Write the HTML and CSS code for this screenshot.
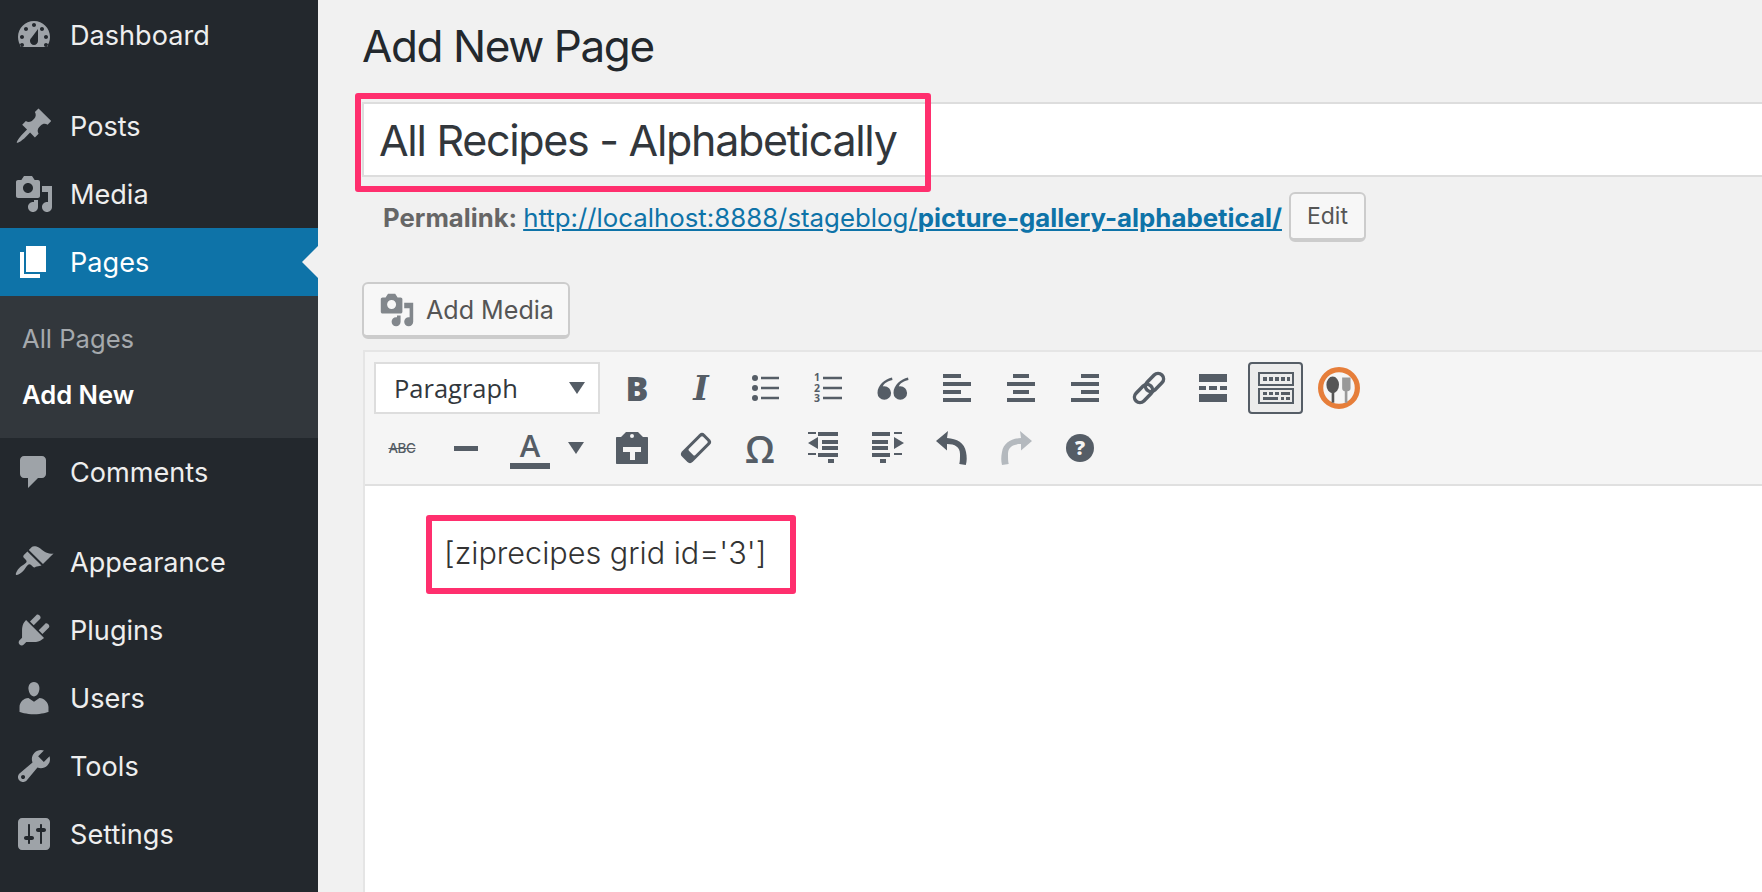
FILE: index.html
```html
<!DOCTYPE html>
<html lang="en">
<head>
  <meta charset="UTF-8">
  <title>Add New Page</title>
  <link rel="stylesheet" href="styles.css">
</head>
<body>
  <nav class="sidebar">
    <a class="menu-item first"><svg class="menu-icon" viewBox="0 0 20 20"><path fill-rule="evenodd" d="M3.76 16h12.48c1.1-1.37 1.76-3.11 1.76-5 0-4.42-3.58-8-8-8s-8 3.58-8 8c0 1.89.66 3.63 1.76 5zM10 4c.55 0 1 .45 1 1s-.45 1-1 1-1-.45-1-1 .45-1 1-1zM6 6c.55 0 1 .45 1 1s-.45 1-1 1-1-.45-1-1 .45-1 1-1zm8 0c.55 0 1 .45 1 1s-.45 1-1 1-1-.45-1-1 .45-1 1-1zm-5.37 5.55L12 7v6c0 1.1-.9 2-2 2s-2-.9-2-2c0-.57.24-1.08.63-1.45zM4 10c.55 0 1 .45 1 1s-.45 1-1 1-1-.45-1-1 .45-1 1-1zm12 0c.55 0 1 .45 1 1s-.45 1-1 1-1-.45-1-1 .45-1 1-1zm-12 4c.55 0 1 .45 1 1s-.45 1-1 1-1-.45-1-1 .45-1 1-1zm12 0c.55 0 1 .45 1 1s-.45 1-1 1-1-.45-1-1 .45-1 1-1z"/></svg>Dashboard</a>
    <a class="menu-item group-start"><svg class="menu-icon" viewBox="0 0 20 20"><path d="M10.44 3.02l1.82-1.82 6.36 6.35-1.83 1.82c-1.05-.68-2.48-.57-3.41.36l-.75.75c-.92.93-1.04 2.35-.35 3.41l-1.83 1.82-2.41-2.41-2.8 2.79c-.42.42-3.38 2.71-3.8 2.29s1.86-3.39 2.28-3.81l2.79-2.79L4.1 9.36l1.83-1.82c1.05.69 2.48.57 3.4-.36l.75-.75c.93-.92 1.05-2.35.36-3.41z"/></svg>Posts</a>
    <a class="menu-item"><svg class="menu-icon" viewBox="0 0 20 20"><path fill-rule="evenodd" d="M13 11V4c0-.55-.45-1-1-1h-1.67L9 1H5L3.67 3H2c-.55 0-1 .45-1 1v7c0 .55.45 1 1 1h10c.55 0 1-.45 1-1zM7 4.5c1.38 0 2.5 1.12 2.5 2.5S8.38 9.5 7 9.5 4.5 8.38 4.5 7 5.62 4.5 7 4.5zM14 6h5v10.5c0 1.38-1.12 2.5-2.5 2.5S14 17.88 14 16.5s1.12-2.5 2.5-2.5c.17 0 .34.02.5.05V9h-3V6zm-4 8.05V13h2v3.5c0 1.38-1.12 2.5-2.5 2.5S7 17.88 7 16.5 8.12 14 9.5 14c.17 0 .34.02.5.05z"/></svg>Media</a>
    <a class="menu-item current"><svg class="menu-icon" viewBox="0 0 20 20"><path d="M6 15V2h10v13H6zm-1 1h8v2H3V5h2v11z"/></svg>Pages</a>
    <div class="submenu">
      <a class="sub-item">All Pages</a>
      <a class="sub-item active">Add New</a>
    </div>
    <a class="menu-item"><svg class="menu-icon" viewBox="0 0 20 20"><path d="M5 2h9c1.1 0 2 .9 2 2v7c0 1.1-.9 2-2 2h-2l-5 5v-5H5c-1.1 0-2-.9-2-2V4c0-1.1.9-2 2-2z"/></svg>Comments</a>
    <a class="menu-item group-start alt"><svg class="menu-icon" viewBox="0 0 20 20"><path d="M14.48 11.06L7.41 3.99l1.5-1.5c.5-.56 2.3-.47 3.51.32 1.21.8 1.43 1.28 2.91 2.1 1.18.64 2.45 1.26 4.45.85zm-.71.71L6.7 4.7 4.93 6.47c-.39.39-.39 1.02 0 1.41l1.06 1.06c.39.39.39 1.03 0 1.42-.6.6-1.43 1.11-2.21 1.69-.35.26-.7.53-1.01.84-1.34 1.34-2.14 3.1-1.77 3.47.37.37 2.13-.43 3.47-1.77.31-.31.58-.66.84-1.01.58-.78 1.09-1.61 1.69-2.21.39-.39 1.02-.39 1.41 0l1.06 1.06c.39.39 1.02.39 1.41 0z"/></svg>Appearance</a>
    <a class="menu-item"><svg class="menu-icon" viewBox="0 0 20 20"><path d="M13.11 4.36L9.87 7.6 8 5.73l3.24-3.24c.35-.34 1.05-.2 1.56.32.52.51.66 1.21.31 1.55zm-8 1.77l.91-1.12 9.01 9.01-1.19.84c-.71.71-2.63 1.16-3.82 1.16H6.14L4.9 17.26c-.59.59-1.54.59-2.12 0-.59-.58-.59-1.53 0-2.12l1.24-1.24v-3.88c0-1.13.4-3.19 1.09-3.89zm7.26 3.97l3.24-3.24c.34-.35 1.04-.21 1.55.31.52.51.66 1.21.31 1.55l-3.24 3.25z"/></svg>Plugins</a>
    <a class="menu-item"><svg class="menu-icon" viewBox="0 0 20 20"><path d="M10 9.25c-2.27 0-2.73-3.44-2.73-3.44C7 4.02 7.82 2 9.97 2c2.16 0 2.98 2.02 2.71 3.81 0 0-.41 3.44-2.68 3.44zm0 2.57L12.72 10c2.39 0 4.52 2.33 4.52 4.53v2.49s-3.65 1.13-7.24 1.13c-3.65 0-7.24-1.13-7.24-1.13v-2.49c0-2.25 1.94-4.48 4.47-4.48z"/></svg>Users</a>
    <a class="menu-item"><svg class="menu-icon" viewBox="0 0 20 20"><path fill-rule="evenodd" d="M16.68 9.77c-1.34 1.34-3.3 1.67-4.95.99l-5.41 6.52c-.99.99-2.59.99-3.58 0s-.99-2.59 0-3.57l6.52-5.42c-.68-1.65-.35-3.61.99-4.95 1.28-1.28 3.12-1.62 4.72-1.06l-2.89 2.89 2.82 2.82 2.86-2.87c.53 1.58.18 3.39-1.08 4.65zM3.81 16.21c.4.39 1.04.39 1.43 0 .4-.4.4-1.04 0-1.43-.39-.4-1.03-.4-1.43 0-.39.39-.39 1.03 0 1.43z"/></svg>Tools</a>
    <a class="menu-item"><svg class="menu-icon" viewBox="0 0 20 20"><path fill-rule="evenodd" d="M18 16V4c0-1.1-.9-2-2-2H4c-1.1 0-2 .9-2 2v12c0 1.1.9 2 2 2h12c1.1 0 2-.9 2-2zM8 11h1c.55 0 1 .45 1 1s-.45 1-1 1H8v1.5c0 .28-.22.5-.5.5s-.5-.22-.5-.5V13H6c-.55 0-1-.45-1-1s.45-1 1-1h1V5.5c0-.28.22-.5.5-.5s.5.22.5.5V11zm5-2h-1c-.55 0-1-.45-1-1s.45-1 1-1h1V5.5c0-.28.22-.5.5-.5s.5.22.5.5V7h1c.55 0 1 .45 1 1s-.45 1-1 1h-1v5.5c0 .28-.22.5-.5.5s-.5-.22-.5-.5V9z"/></svg>Settings</a>
  </nav>

  <main class="content">
    <h1 class="page-title">Add New Page</h1>

    <div class="title-field">
      <div class="title-input">All Recipes - Alphabetically</div>
      <div class="highlight title-highlight"></div>
    </div>

    <div class="permalink">
      <strong class="permalink-label">Permalink:</strong>
      <a class="permalink-url">http://localhost:8888/stageblog/<b>picture-gallery-alphabetical/</b></a>
      <span class="btn btn-edit">Edit</span>
    </div>

    <div class="media-row">
      <span class="btn btn-media"><svg class="media-icon" viewBox="0 0 20 20"><path fill-rule="evenodd" d="M13 11V4c0-.55-.45-1-1-1h-1.67L9 1H5L3.67 3H2c-.55 0-1 .45-1 1v7c0 .55.45 1 1 1h10c.55 0 1-.45 1-1zM7 4.5c1.38 0 2.5 1.12 2.5 2.5S8.38 9.5 7 9.5 4.5 8.38 4.5 7 5.62 4.5 7 4.5zM14 6h5v10.5c0 1.38-1.12 2.5-2.5 2.5S14 17.88 14 16.5s1.12-2.5 2.5-2.5c.17 0 .34.02.5.05V9h-3V6zm-4 8.05V13h2v3.5c0 1.38-1.12 2.5-2.5 2.5S7 17.88 7 16.5 8.12 14 9.5 14c.17 0 .34.02.5.05z"/></svg>Add Media</span>
    </div>

    <section class="editor">
      <div class="toolbar">
        <div class="tool-row first-row">
          <div class="format-select">Paragraph<span class="caret"></span></div>
          <span class="tool"><span class="glyph-b">B</span></span>
          <span class="tool"><span class="glyph-i">I</span></span>
          <span class="tool"><svg class="ico" viewBox="0 0 40 40"><circle cx="10" cy="10" r="3"/><circle cx="10" cy="20" r="3"/><circle cx="10" cy="30" r="3"/><path d="M16 8.800h18v2.400H16zM16 18.800h18v2.400H16zM16 28.800h18v2.400H16z"/></svg></span>
          <span class="tool"><svg class="ico" viewBox="0 0 40 40"><text class="ol-num" x="5" y="13">1</text><text class="ol-num" x="5" y="23.500">2</text><text class="ol-num" x="5" y="34">3</text><path d="M14 8.800h19v2.400H14zM14 18.800h19v2.400H14zM14 28.800h19v2.400H14z"/></svg></span>
          <span class="tool"><svg class="ico" viewBox="0 0 40 40"><path d="M19 9.500C12 11 4.500 17 4.500 25a6.800 6.800 0 1 0 6.800-6.800c-.5 0-1 .1-1.500.2C11 15.500 14.500 13 19.500 12zM35 9.500C28 11 20.500 17 20.500 25a6.800 6.800 0 1 0 6.800-6.800c-.5 0-1 .1-1.500.2C27 15.500 30.500 13 35.500 12z"/></svg></span>
          <span class="tool"><svg class="ico" viewBox="0 0 40 40"><path d="M6 6h18v4H6zM6 14h28v4H6zM6 22h18v4H6zM6 30h28v4H6z"/></svg></span>
          <span class="tool"><svg class="ico" viewBox="0 0 40 40"><path d="M12 6h16v4H12zM6 14h28v4H6zM12 22h16v4H12zM6 30h28v4H6z"/></svg></span>
          <span class="tool"><svg class="ico" viewBox="0 0 40 40"><path d="M16 6h18v4H16zM6 14h28v4H6zM16 22h18v4H16zM6 30h28v4H6z"/></svg></span>
          <span class="tool"><svg class="ico" viewBox="0 0 40 40"><g class="link-strokes"><rect x="20" y="4" width="11" height="21" rx="5.500" transform="rotate(45 25.500 14.500)"/><rect x="9" y="15" width="11" height="21" rx="5.500" transform="rotate(45 14.500 25.500)"/></g></svg></span>
          <span class="tool"><svg class="ico" viewBox="0 0 40 40"><path d="M6 6h28v8H6zM6 18h7v4H6zM16 18h8v4h-8zM27 18h7v4h-7zM6 26h28v8H6z"/></svg></span>
          <span class="tool tool-active"><svg class="ico-wide" viewBox="0 0 36 32"><path fill-rule="evenodd" d="M0 0h36v14H0zM2 2v10h32V2zM0 16h36v16H0zM2 18v12h32V18z"/><path d="M5 5h4v4H5zM11 5h4v4h-4zM17 5h4v4h-4zM23 5h4v4h-4zM29 5h3v4h-3zM5 20h4v3H5zM11 20h4v3h-4zM17 20h4v3h-4zM23 20h9v3h-9zM5 25h15v3H5zM23 25h3v3h-3zM28 25h4v3h-4z"/></svg></span>
          <span class="tool tool-logo"><svg class="ico-logo" viewBox="0 0 40 40"><circle cx="20" cy="20" r="17.500" fill="#f5f5f5" stroke="#e67e3a" stroke-width="5"/><ellipse cx="14" cy="17" rx="6" ry="8" fill="#555"/><path d="M13 22h2.500v12H13z" fill="#555"/><path d="M23 10h8v10c0 2-1 3-3 3v11h-2.500V23c-1.500 0-2.500-1-2.500-3z" fill="#999"/></svg></span>
        </div>
        <div class="tool-row second-row">
          <span class="tool-b"><span class="glyph-abc">ABC</span></span>
          <span class="tool-b"><svg class="ico" viewBox="0 0 40 40"><path d="M8 18h24v5H8z"/></svg></span>
          <span class="tool-color"><span class="glyph-a">A</span><span class="caret caret-color"></span></span>
          <span class="tool-b"><svg class="ico" viewBox="0 0 40 40"><path fill-rule="evenodd" d="M14 4h12l5 5h4c.6 0 1 .4 1 1v25c0 .6-.4 1-1 1H5c-.6 0-1-.4-1-1V10c0-.6.4-1 1-1h4zM20 6a2 2 0 1 0 0 4 2 2 0 0 0 0-4zM11 19v5h7v8h5v-8h6v-5z"/></svg></span>
          <span class="tool-b"><svg class="ico" viewBox="0 0 40 40"><g transform="rotate(45 20 20)"><rect x="12.500" y="4" width="15" height="32" rx="4"/><rect class="eraser-hole" x="15.500" y="7" width="9" height="20" rx="1.500"/></g></svg></span>
          <span class="tool-b"><span class="glyph-omega">Ω</span></span>
          <span class="tool-b"><svg class="ico" viewBox="0 0 40 40"><path d="M14 4h20v4H14zM4 15l10-6v12zM18 12h16v4H18zM18 18h16v4H18zM4 25h8v2H4zM14 25h20v4H14zM24 31h6v4h-6zM4 4h8v2H4z"/></svg></span>
          <span class="tool-b"><svg class="ico" viewBox="0 0 40 40"><path d="M4 4h18v4H4zM26 4h8v2h-8zM4 12h16v4H4zM26 9l10 6-10 6zM4 18h16v4H4zM4 25h18v4H4zM26 25h8v2h-8zM12 31h6v4h-6z"/></svg></span>
          <span class="tool-b"><svg class="ico" viewBox="0 0 40 40"><path d="M16 3L4 13l11 9.500V16c8 0 13 3 13 10 0 4 0 7-.7 10l6.500 1C35 33 35 29 34 24c-1.500-9-9-13.500-19-14z"/></svg></span>
          <span class="tool-b"><svg class="ico muted" viewBox="0 0 40 40"><path d="M24 3l12 10-11 9.500V16c-8 0-13 3-13 10 0 4 0 7 .7 10L6 37C5 33 5 29 6 24c1.500-9 9-13.500 19-14z"/></svg></span>
          <span class="tool-b"><span class="glyph-help">?</span></span>
        </div>
      </div>
      <div class="editor-body">
        <div class="shortcode">[ziprecipes grid id='3']<div class="highlight code-highlight"></div></div>
      </div>
    </section>
  </main>
</body>
</html>
```

FILE: styles.css
```css
html, body {
  margin: 0;
  height: 100%;
  overflow: hidden;
}
body {
  display: flex;
  background: #f1f1f1;
  font-family: Inter, "Liberation Sans", sans-serif;
  color: #23282d;
}

/* sidebar */
.sidebar {
  width: 318px;
  flex: none;
  background: #23282d;
  color: #eee;
  font-size: 27.100px;
}
.menu-item {
  display: flex;
  align-items: center;
  height: 68px;
  position: relative;
}
.menu-item.first { margin-top: 1px; }
.menu-item.group-start { margin-top: 23px; }
.menu-item.alt { margin-top: 22px; }
.menu-icon {
  width: 40px;
  height: 40px;
  margin: 0 16px 0 14px;
  fill: #9ea3a8;
}
.menu-item.current {
  background: #0e73a8;
  color: #fff;
}
.menu-item.current .menu-icon { fill: #fff; }
.menu-item.current::after {
  content: "";
  position: absolute;
  right: 0;
  top: 50%;
  margin-top: -16px;
  border: 16px solid transparent;
  border-left: 0;
  border-right-color: #f1f1f1;
}
.submenu {
  background: #32373c;
  padding: 15px 0;
}
.sub-item {
  display: block;
  height: 56px;
  line-height: 56px;
  padding-left: 22px;
  font-size: 25.600px;
  color: #a5a9ad;
}
.sub-item.active {
  color: #fff;
  font-weight: 600;
}

/* main column */
.content {
  flex: 1;
  min-width: 0;
  padding: 19px 0 0 44px;
  overflow: hidden;
}
.page-title {
  margin: 0;
  height: 57px;
  line-height: 55px;
  font-size: 44px;
  font-weight: 400;
  letter-spacing: -1.400px;
}
.title-field {
  position: relative;
  margin: 26px -10px 0 0;
}
.title-input {
  height: 71px;
  line-height: 73px;
  padding-left: 15px;
  background: #fff;
  border: 2px solid #ddd;
  font-size: 43px;
  letter-spacing: -1.300px;
  color: #32373c;
}
.highlight {
  position: absolute;
  border: 6px solid #ff2f6e;
  border-radius: 3px;
  box-sizing: border-box;
}
.title-highlight {
  left: -7px;
  top: -9px;
  width: 576px;
  height: 99px;
}
.permalink {
  display: flex;
  align-items: center;
  height: 50px;
  margin-top: 15px;
  padding-left: 21px;
  font-size: 25.700px;
  white-space: nowrap;
}
.permalink-label {
  color: #666;
  margin-right: 6px;
}
.permalink-url {
  color: #0e73a8;
  font-size: 25.820px;
  text-decoration: underline;
}
.btn {
  display: inline-flex;
  align-items: center;
  box-sizing: border-box;
  background: #f7f7f7;
  border: 2px solid #ccc;
  border-bottom-width: 4px;
  border-radius: 6px;
  color: #555;
  white-space: nowrap;
}
.btn-edit {
  width: 77px;
  height: 50px;
  margin-left: 7px;
  justify-content: center;
  font-size: 23px;
}
.media-row {
  margin-top: 40px;
  height: 57px;
}
.btn-media {
  width: 208px;
  height: 57px;
  padding-left: 15px;
  font-size: 25.100px;
}
.media-icon {
  width: 36px;
  height: 36px;
  margin-right: 11px;
  fill: #82878c;
}

/* editor box */
.editor {
  margin: 11px -10px 0 1px;
  height: 600px;
  background: #fff;
  border: 2px solid #e5e5e5;
}
.toolbar {
  height: 134px;
  box-sizing: border-box;
  padding: 10px 0 0 9px;
  background: #f5f5f5;
  border-bottom: 2px solid #e0e0e0;
  fill: #555d66;
  color: #555d66;
}
.tool-row {
  display: flex;
  align-items: center;
  height: 52px;
}
.second-row {
  margin-top: 8px;
  margin-left: -4px;
}
.format-select {
  display: flex;
  align-items: center;
  justify-content: space-between;
  box-sizing: border-box;
  width: 226px;
  height: 52px;
  margin-right: 5px;
  padding: 0 13px 0 18px;
  background: #fff;
  border: 2px solid #ddd;
  font-family: "Open Sans", sans-serif;
  font-size: 25.500px;
  color: #32373c;
}
.caret {
  width: 0;
  height: 0;
  border: 8px solid transparent;
  border-top: 12px solid #555d66;
  border-bottom: 0;
}
.tool, .tool-b, .tool-color {
  display: flex;
  align-items: center;
  justify-content: center;
  height: 52px;
  flex: none;
}
.tool, .tool-b { width: 64px; }
.tool-color {
  width: 102px;
  justify-content: flex-start;
  padding-left: 12px;
  box-sizing: border-box;
}
.tool-active {
  box-sizing: border-box;
  width: 55px;
  margin-left: 3px;
  background: #ececec;
  border: 2px solid #555d66;
  border-radius: 4px;
}
.tool-logo { margin-left: 4px; }
.ico { width: 40px; height: 40px; }
.ico-wide { width: 36px; height: 32px; }
.ico-logo {
  width: 42px;
  height: 42px;
  filter: blur(.6px);
}
.muted { fill: #b4b9be; }
.eraser-hole { fill: #f5f5f5; }
.glyph-b {
  font-family: "Open Sans", sans-serif;
  font-weight: 800;
  font-size: 34px;
}
.glyph-i {
  font-family: "DejaVu Serif", serif;
  font-style: italic;
  font-weight: 700;
  font-size: 33px;
}
.ol-num {
  font-family: "Open Sans", sans-serif;
  font-size: 10.500px;
  font-weight: 700;
}
.link-strokes rect {
  fill: none;
  stroke: #555d66;
  stroke-width: 3.500;
}
.glyph-abc {
  font-family: Inter, sans-serif;
  font-size: 13.500px;
  font-weight: 500;
  letter-spacing: -.4px;
  text-decoration: line-through;
}
.glyph-a {
  display: block;
  width: 40px;
  text-align: center;
  font-family: "Open Sans", sans-serif;
  font-weight: 600;
  font-size: 31px;
  line-height: 36px;
  border-bottom: 6px solid #555d66;
}
.caret-color { margin-left: 18px; }
.glyph-omega {
  font-family: "Open Sans", sans-serif;
  font-weight: 600;
  font-size: 38px;
}
.glyph-help {
  display: block;
  width: 28px;
  height: 28px;
  line-height: 28px;
  text-align: center;
  border-radius: 50%;
  background: #555d66;
  color: #f5f5f5;
  font-family: "Open Sans", sans-serif;
  font-weight: 800;
  font-size: 20px;
}
.editor-body {
  padding: 29px 0 0 79px;
}
.shortcode {
  position: relative;
  display: inline-block;
  font-size: 30.600px;
  font-weight: 300;
  line-height: 76px;
  height: 79px;
  white-space: nowrap;
  color: #333;
}
.code-highlight {
  left: -18px;
  top: 0;
  width: 370px;
  height: 79px;
}
```
